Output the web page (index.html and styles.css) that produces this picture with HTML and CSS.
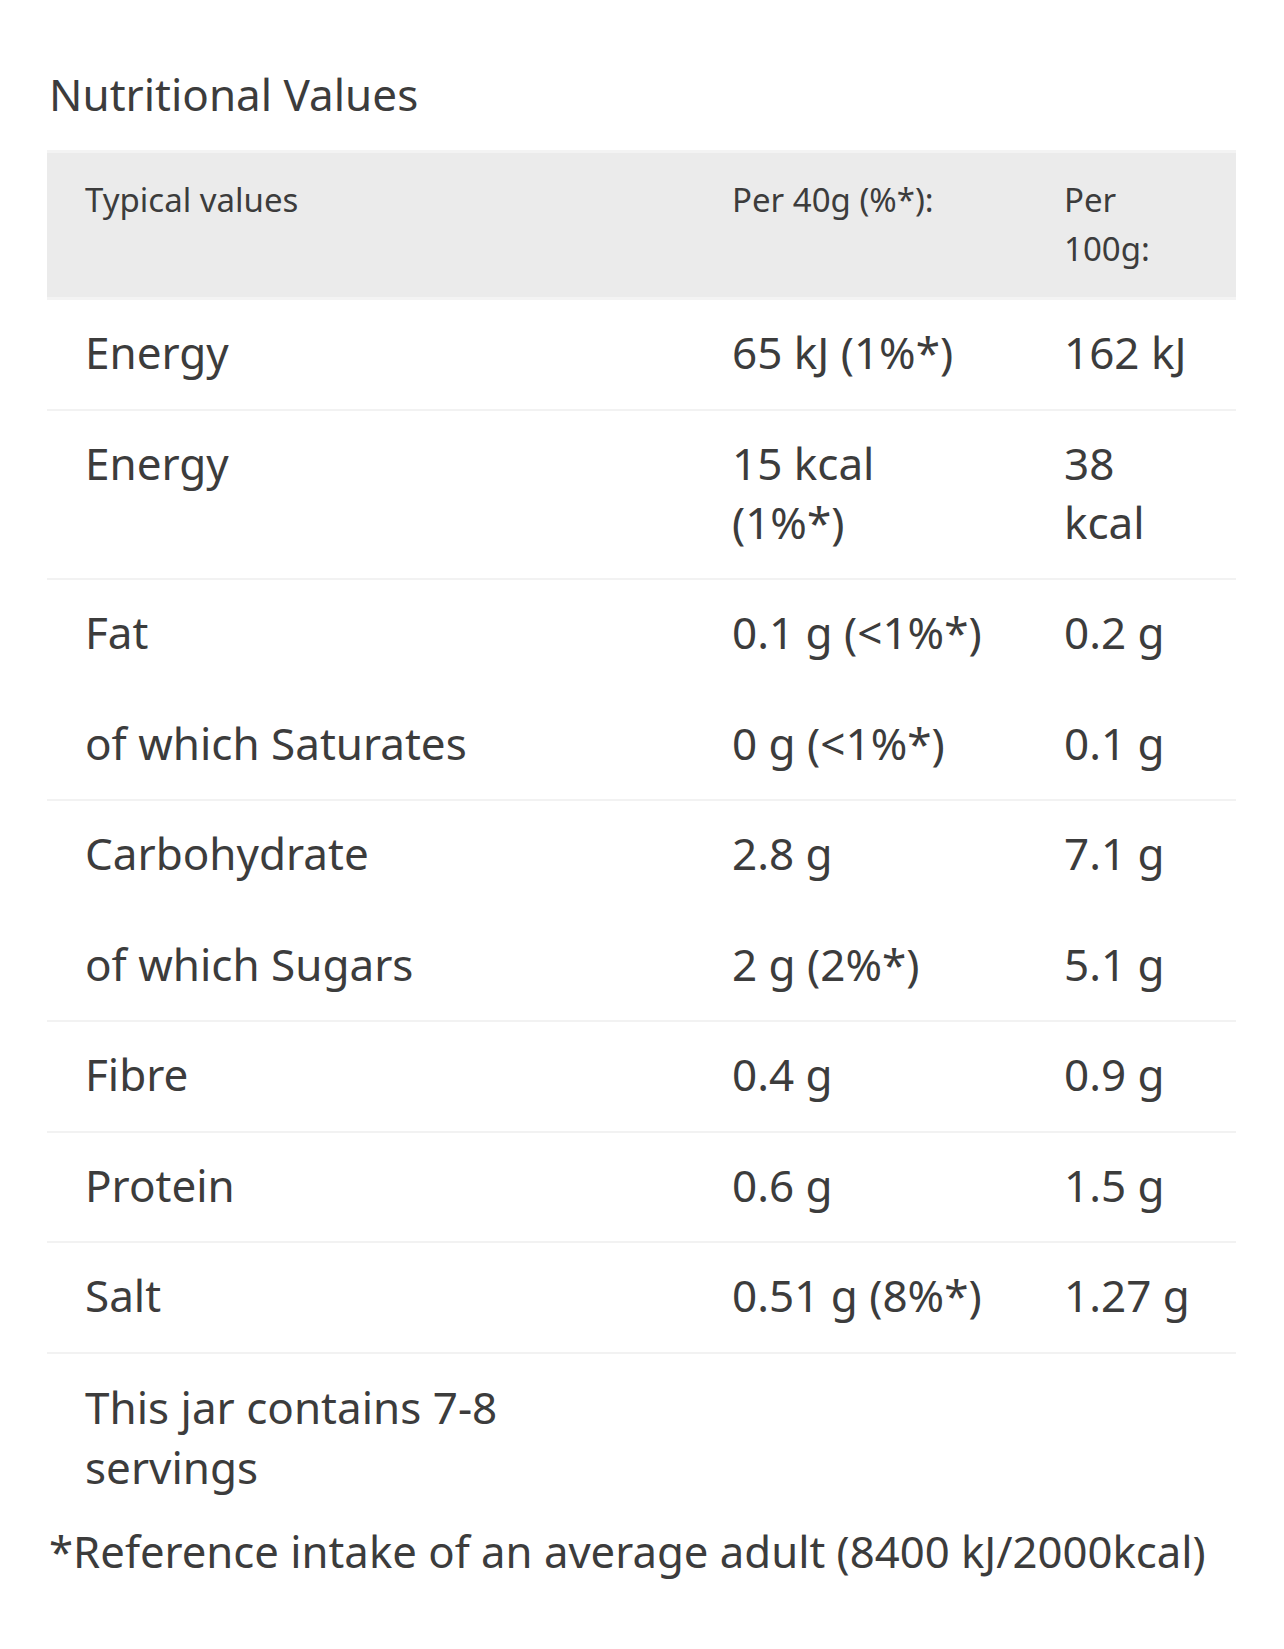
FILE: index.html
```html
<!DOCTYPE html>
<html lang="en">
<head>
    <meta charset="UTF-8">
    <meta name="viewport" content="width=device-width, initial-scale=1.0">
    <title>Nutritional Values</title>
    <link rel="stylesheet" href="styles.css">
</head>
<body>

    <div class="nutrition">
        <h2 class="nutrition-title">Nutritional Values</h2>

        <table class="nutrition-table">
            <colgroup>
                <col class="col-name">
                <col class="col-serving">
                <col class="col-100g">
            </colgroup>
            <thead>
                <tr>
                    <th>Typical values</th>
                    <th>Per 40g (%*):</th>
                    <th>Per 100g:</th>
                </tr>
            </thead>
            <tbody>
                <tr>
                    <td>Energy</td>
                    <td>65 kJ (1%*)</td>
                    <td>162 kJ</td>
                </tr>
            </tbody>
            <tbody>
                <tr>
                    <td>Energy</td>
                    <td>15 kcal (1%*)</td>
                    <td>38 kcal</td>
                </tr>
            </tbody>
            <tbody>
                <tr>
                    <td>Fat</td>
                    <td>0.1 g (&lt;1%*)</td>
                    <td>0.2 g</td>
                </tr>
                <tr>
                    <td>of which Saturates</td>
                    <td>0 g (&lt;1%*)</td>
                    <td>0.1 g</td>
                </tr>
            </tbody>
            <tbody>
                <tr>
                    <td>Carbohydrate</td>
                    <td>2.8 g</td>
                    <td>7.1 g</td>
                </tr>
                <tr>
                    <td>of which Sugars</td>
                    <td>2 g (2%*)</td>
                    <td>5.1 g</td>
                </tr>
            </tbody>
            <tbody>
                <tr>
                    <td>Fibre</td>
                    <td>0.4 g</td>
                    <td>0.9 g</td>
                </tr>
            </tbody>
            <tbody>
                <tr>
                    <td>Protein</td>
                    <td>0.6 g</td>
                    <td>1.5 g</td>
                </tr>
            </tbody>
            <tbody>
                <tr>
                    <td>Salt</td>
                    <td>0.51 g (8%*)</td>
                    <td>1.27 g</td>
                </tr>
            </tbody>
            <tbody class="servings">
                <tr>
                    <td>This jar contains 7-8 servings</td>
                    <td></td>
                    <td></td>
                </tr>
            </tbody>
        </table>

        <p class="nutrition-note">*Reference intake of an average adult (8400 kJ/2000kcal)</p>
    </div>

</body>
</html>
```
FILE: styles.css
```css
body {
    margin: 0;
    padding: 0;
    background-color: #fff;
    font-family: 'Noto Sans', sans-serif;
    color: #3c3c3c;
}

.nutrition {
    width: 1189px;
    margin-left: 47px;
}

.nutrition-title {
    font-size: 44px;
    font-weight: 400;
    line-height: 55px;
    margin: 67px 0 28px 2px;
}

.nutrition-table {
    width: 100%;
    border-collapse: collapse;
    table-layout: fixed;
}

.col-name {
    width: 647px;
}

.col-serving {
    width: 332px;
}

.col-100g {
    width: 210px;
}

.nutrition-table th {
    background-color: #ebebeb;
    border-top: 3px solid #f3f3f3;
    border-bottom: 3px solid #f3f3f3;
    font-size: 33px;
    font-weight: 400;
    line-height: 49px;
    text-align: left;
    vertical-align: top;
    padding: 22px 38px 24px;
}

.nutrition-table td {
    font-size: 44px;
    line-height: 59px;
    vertical-align: top;
    padding: 23px 38px 26.5px;
    border-bottom: 2px solid transparent;
}

.nutrition-table tbody tr:last-child td {
    border-bottom-color: #f2f2f2;
}

.nutrition-table .servings tr:last-child td {
    border-bottom-color: transparent;
    line-height: 60px;
    padding-bottom: 21px;
}

.nutrition-note {
    font-size: 43.7px;
    line-height: 59px;
    margin: 2px 0 0 2px;
}
```
